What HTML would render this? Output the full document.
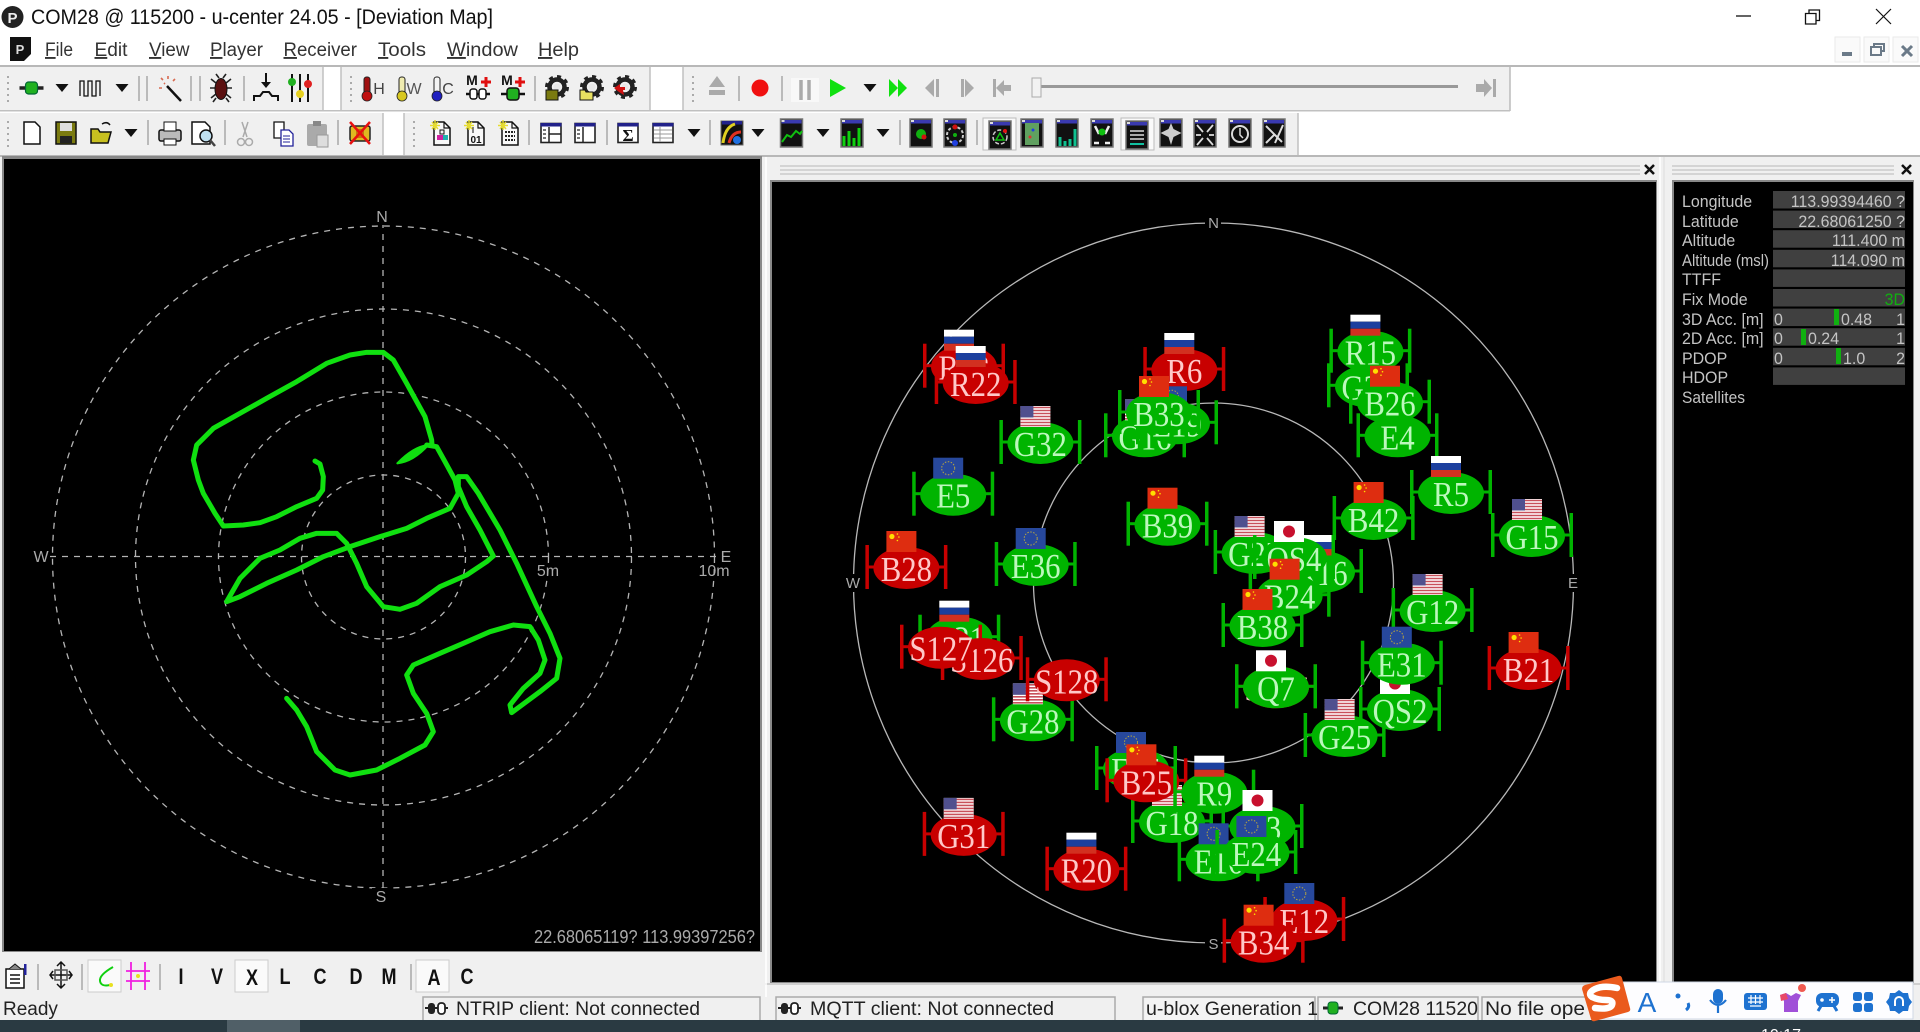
<!DOCTYPE html>
<html><head><meta charset="utf-8"><title>u-center</title>
<style>
html,body{margin:0;padding:0;background:#fff;overflow:hidden}
svg{display:block;font-family:"Liberation Sans",sans-serif}
.m{font-size:19px;fill:#333}
.m tspan{text-decoration:underline}
.st{font-size:19px;fill:#222}
.lb{font-size:17px;fill:#c4c4c4;transform-box:fill-box;transform-origin:0 0;transform:scaleX(.94)}
.lx{font-size:17px;fill:#c4c4c4}
.vl{font-size:17px;fill:#c4c4c4;text-anchor:end;transform-box:fill-box;transform-origin:100% 0;transform:scaleX(.94)}
.dl{font-size:16px;fill:#aaa;text-anchor:middle}
.skl{font-size:15px;fill:#aaa;text-anchor:middle}
.sep{stroke:#a8a8a8;stroke-width:1.5}
.sat text{font-family:"Liberation Serif",serif;font-size:35px;text-anchor:middle;transform:scale(.88,1)}
.g{color:#00b400}.g text{fill:#bcf8bc}
.r{color:#c80000}.r text{fill:#ffc8c8}
.tb{font-size:22px;font-weight:bold;fill:#111;text-anchor:middle;transform-box:fill-box;transform-origin:50% 50%;transform:scaleX(.82)}
</style></head><body>
<svg width="1920" height="1032" viewBox="0 0 1920 1032" xmlns="http://www.w3.org/2000/svg">
<defs>
<g id="b" fill="currentColor">
<ellipse cx="0" cy="1" rx="33" ry="21"/>
<rect x="-41" y="-22" width="3.5" height="44"/><rect x="37.5" y="-22" width="3.5" height="44"/>
<rect x="-40" y="-1.5" width="80" height="3"/>
</g>
<g id="ru"><rect width="30" height="7" fill="#fff"/><rect y="7" width="30" height="7" fill="#1c3f9e"/><rect y="14" width="30" height="7" fill="#d23020"/></g>
<g id="cn"><rect width="30" height="21" fill="#de2d10"/><circle cx="5.500" cy="5.500" r="2.600" fill="#ffde00"/><circle cx="11" cy="3" r=".8" fill="#ffde00"/><circle cx="12.500" cy="6" r=".8" fill="#ffde00"/><circle cx="11" cy="9.500" r=".8" fill="#ffde00"/></g>
<g id="us"><rect width="30" height="21" fill="#fff"/><path d="M0 1.500h30M0 4.500h30M0 7.500h30M0 10.500h30M0 13.500h30M0 16.500h30M0 19.500h30" stroke="#c8505a" stroke-width="1.600"/><rect width="13" height="11.500" fill="#50508e"/></g>
<g id="eu"><rect width="30" height="21" fill="#27489c"/><circle cx="15" cy="10.500" r="6.500" fill="none" stroke="#b8a640" stroke-width="1" stroke-dasharray="1.500 1.500"/></g>
<g id="jp"><rect width="30" height="21" fill="#fff"/><circle cx="15" cy="10.500" r="6" fill="#c8102e"/></g>
<path id="d" d="M-6.500-4H6.500L0 4z" fill="#111"/>
<g id="w"><rect x="-11" y="-14" width="22" height="28" fill="#111" stroke="#777" stroke-width="1.500"/><rect x="-10" y="-13" width="20" height="3.500" fill="#3a3ab0"/><rect x="-10" y="-13" width="3" height="2" fill="#ddd"/></g>
<g id="gr" fill="#aaa"><rect x="0" y="-12" width="2" height="2"/><rect x="0" y="-6" width="2" height="2"/><rect x="0" y="0" width="2" height="2"/><rect x="0" y="6" width="2" height="2"/><rect x="0" y="12" width="2" height="2"/></g>
<g id="gear"><circle r="7.500" fill="none" stroke="#222" stroke-width="4.500"/><circle r="10.500" fill="none" stroke="#222" stroke-width="3" stroke-dasharray="4 4.200"/><circle r="3.500" fill="#e8e8e8"/></g>
<g id="dp"><path d="M-8-11H2l6 6V12H-8z" fill="#f8f8f8" stroke="#111" stroke-width="1.500"/><path d="M2-11v6h6" fill="none" stroke="#111" stroke-width="1.200"/></g>
<g id="sp"><path d="M-10-11l6 7M-4-11l-6 7M-12-7.500h10M-7-13v10" stroke="#e6dc30" stroke-width="1.500"/></g>
<g id="lay"><rect x="-10" y="-9.500" width="20" height="19" fill="#fff" stroke="#222" stroke-width="1.600"/><rect x="-10.500" y="-10" width="21" height="3.500" fill="#22228a"/></g>
</defs>

<rect width="1920" height="1032" fill="#fff"/>
<!-- title -->
<circle cx="12.500" cy="17" r="11" fill="#222"/><text x="12.500" y="23" font-size="15" font-weight="bold" fill="#eee" text-anchor="middle">P</text>
<text x="31" y="24" font-size="21" fill="#111" textLength="462" lengthAdjust="spacingAndGlyphs">COM28 @ 115200 - u-center 24.05 - [Deviation Map]</text>
<path d="M1736 16h15" stroke="#111" stroke-width="1.300"/>
<path d="M1805.500 13.500h10.500v10.500h-10.500zM1809 13.500v-3.500h10.500v10.500h-3.500" fill="none" stroke="#111" stroke-width="1.300"/>
<path d="M1876 9l15 15M1891 9l-15 15" stroke="#111" stroke-width="1.200"/>
<!-- menu -->
<path d="M10 37h21v17l-7 7h-14z" fill="#111"/><text x="20" y="54" font-size="13" font-weight="bold" fill="#ddd" text-anchor="middle">P</text>
<text class="m" x="45" y="56" textLength="28" lengthAdjust="spacingAndGlyphs"><tspan>F</tspan>ile</text>
<text class="m" x="94.500" y="56" textLength="33" lengthAdjust="spacingAndGlyphs"><tspan>E</tspan>dit</text>
<text class="m" x="149" y="56" textLength="40.500" lengthAdjust="spacingAndGlyphs"><tspan>V</tspan>iew</text>
<text class="m" x="210" y="56" textLength="53" lengthAdjust="spacingAndGlyphs"><tspan>P</tspan>layer</text>
<text class="m" x="283.500" y="56" textLength="73.500" lengthAdjust="spacingAndGlyphs"><tspan>R</tspan>eceiver</text>
<text class="m" x="378" y="56" textLength="48" lengthAdjust="spacingAndGlyphs"><tspan>T</tspan>ools</text>
<text class="m" x="447" y="56" textLength="71" lengthAdjust="spacingAndGlyphs"><tspan>W</tspan>indow</text>
<text class="m" x="538" y="56" textLength="41" lengthAdjust="spacingAndGlyphs"><tspan>H</tspan>elp</text>
<g fill="#fafafa" stroke="#eaeaea"><rect x="1835" y="37" width="25" height="25"/><rect x="1864" y="37" width="25" height="25"/><rect x="1893" y="37" width="25" height="25"/></g>
<rect x="1842" y="52" width="10" height="4" fill="#6b7a88"/>
<path d="M1871 47h10v8h-10zM1874 47v-3h10v7h-3" fill="none" stroke="#6b7a88" stroke-width="2"/>
<path d="M1902 46l10 10M1912 46l-10 10" stroke="#6b7a88" stroke-width="3"/>

<!-- toolbars background -->
<rect x="0" y="65" width="1920" height="2" fill="#b8b8b8"/>
<rect x="0" y="67" width="323" height="44" fill="#f0f0f0"/>
<rect x="341" y="67" width="309" height="44" fill="#f0f0f0"/>
<rect x="683" y="67" width="827" height="44" fill="#f0f0f0"/>
<path d="M1510 67v44" stroke="#bbb" stroke-width="1.500"/>
<rect x="0" y="110" width="1510" height="1.500" fill="#c0c0c0"/>
<rect x="0" y="113" width="383" height="42" fill="#f0f0f0"/>
<rect x="404" y="113" width="894" height="42" fill="#f0f0f0"/>
<path d="M383 113v42M404 113v42M1298 113v42M323 67v44M341 67v44M650 67v44M683 67v44" stroke="#c0c0c0" stroke-width="1.500"/>
<rect x="0" y="155" width="1920" height="2" fill="#b8b8b8"/>
<!-- main bg -->
<rect x="0" y="157" width="1920" height="863" fill="#f0f0f0"/>

<!-- toolbar row1 -->
<g>
<use href="#gr" x="7" y="88"/><use href="#gr" x="350" y="88"/><use href="#gr" x="692" y="88"/>
<g transform="translate(31.500,88)"><path d="M-12 0h24" stroke="#222" stroke-width="3.500"/><rect x="-6" y="-6" width="12" height="12" rx="3" fill="#20b020" stroke="#063" stroke-width="1.200"/></g>
<use href="#d" x="62" y="88"/>
<path d="M80 96V81h4v15h4V81h4v15h4V81h4v15" fill="none" stroke="#111" stroke-width="1.300"/>
<use href="#d" x="122" y="88"/>
<path class="sep" d="M139 76v25M147 76v25M191 76v25M200 76v25M244 76v25M535 76v25M739 76v25M782 76v25"/>
<g transform="translate(170,88)"><path d="M-3-2L11 13" stroke="#111" stroke-width="2.500"/><path d="M-9-10l2 2M-11 0h3M-2-12v3M3-7l2-2M-6-5l1 1" stroke="#d86a50" stroke-width="1.600"/></g>
<g transform="translate(221,88)"><path d="M-10-9l5 4M10-9l-5 4M-11 0h22M-10 10l5-4M10 10l-5-4M-5-14l3 4M5-14l-3 4M-8 14l3-4M8 14l-3-4" stroke="#222" stroke-width="1.600"/><ellipse cy="1" rx="6" ry="10.500" fill="#5a1010" stroke="#111"/></g>
<g transform="translate(266,88)"><path d="M0-15v12" stroke="#111" stroke-width="2"/><path d="M-5-6L0 0L5-6z" fill="#111"/><path d="M-12 13V8h6l3-4h6l3 4h6v5" fill="none" stroke="#111" stroke-width="2"/></g>
<g transform="translate(300,88)"><path d="M-8-14V14M0-14V14M8-14V14" stroke="#111" stroke-width="2"/><circle cx="-8" cy="-6" r="4" fill="#20b020"/><circle cx="0" cy="6" r="4" fill="#e6d020"/><circle cx="8" cy="-4" r="4" fill="#e02020"/></g>
<!-- thermometers -->
<g transform="translate(367,88)"><rect x="-3" y="-11" width="6" height="20" rx="2.500" fill="#a01010" stroke="#222"/><circle cy="8" r="5" fill="#c01010" stroke="#222" stroke-width=".8"/></g><text x="379" y="94" font-size="16" fill="#444" text-anchor="middle">H</text>
<g transform="translate(402,88)"><rect x="-3" y="-11" width="6" height="20" rx="2.500" fill="#f0ecb0" stroke="#222"/><circle cy="8" r="5" fill="#d8c820" stroke="#222" stroke-width=".8"/></g><text x="414" y="94" font-size="16" fill="#555" text-anchor="middle">W</text>
<g transform="translate(437,88)"><rect x="-3" y="-11" width="6" height="20" rx="2.500" fill="#f4f4f4" stroke="#222"/><circle cy="8" r="5" fill="#2020c0" stroke="#222" stroke-width=".8"/></g><text x="448" y="94" font-size="16" fill="#444" text-anchor="middle">C</text>
<g transform="translate(478,88)"><text x="-6" y="-3" font-size="14" font-weight="bold" fill="#111" text-anchor="middle">M</text><path d="M8-11v10M3-6h10" stroke="#e01010" stroke-width="3"/><path d="M-12 6h24" stroke="#111" stroke-width="2.500"/><rect x="-8" y="1" width="7" height="10" rx="2.500" fill="#fff" stroke="#111" stroke-width="1.500"/><rect x="1" y="1" width="7" height="10" rx="2.500" fill="#fff" stroke="#111" stroke-width="1.500"/></g>
<g transform="translate(513,88)"><text x="-6" y="-3" font-size="14" font-weight="bold" fill="#111" text-anchor="middle">M</text><path d="M7-11v10M2-6h10" stroke="#e01010" stroke-width="3"/><path d="M-12 6h24" stroke="#111" stroke-width="2.500"/><rect x="-6" y="0" width="12" height="12" rx="3" fill="#20b020" stroke="#111" stroke-width="1.500"/></g>
<use href="#gear" x="557" y="87"/><rect x="546" y="90" width="12" height="10" fill="#7a7a10" stroke="#111"/>
<use href="#gear" x="592" y="87"/><path d="M580 100V90h5l1 2h7v8z" fill="#e8e060" stroke="#111"/>
<use href="#gear" x="625" y="87"/><path d="M614 88l6-4v3h5v3h-2l1 5-5-3z" fill="#d01010"/>
<path d="M709 87l8-11 8 11zM709 90h16v5h-16z" fill="#aaa"/>
<circle cx="760" cy="88" r="8.500" fill="#f01010"/>
<rect x="791" y="78" width="28" height="24" fill="#f8f8f8"/><path d="M801 80v20M809 80v20" stroke="#aaa" stroke-width="3.500"/>
<path d="M830 79l16 9-16 9z" fill="#10e010"/>
<use href="#d" x="870" y="88"/>
<path d="M889 79l9 9-9 9zM898 79l9 9-9 9z" fill="#10e010"/>
<path d="M925 88l9-9v18zM936 79h3v18h-3z" fill="#aaa"/>
<path d="M974 88l-9-9v18zM961 79h3v18h-3z" fill="#aaa"/>
<path d="M993 79h3v18h-3zM996 88l8-8v5h7v6h-7v5z" fill="#aaa"/>
<rect x="1041" y="85" width="417" height="3" fill="#999"/>
<rect x="1032" y="78" width="9" height="19" fill="#f2f2f2" stroke="#aaa"/>
<path d="M1476 84h8v-5l8 9-8 9v-5h-8zM1493 79h3v18h-3z" fill="#aaa"/>
</g>

<!-- toolbar row2 -->
<g>
<use href="#gr" x="7" y="133"/><use href="#gr" x="413" y="133"/>
<path d="M24 122h11l5 5v17h-16z" fill="#fff" stroke="#111" stroke-width="1.500"/>
<rect x="56" y="122" width="20" height="22" fill="#7a7a10" stroke="#111" stroke-width="1.500"/><rect x="60" y="123" width="12" height="8" fill="#ddd"/><rect x="60" y="136" width="12" height="7" fill="#222"/>
<path d="M91 143v-14h7l2 3h11l-3 11z" fill="#c8c020" stroke="#111" stroke-width="1.500"/><path d="M102 124q5-3 8 1" fill="none" stroke="#111" stroke-width="1.500"/>
<use href="#d" x="131" y="133"/>
<path class="sep" d="M148 120v25M225 120v25M338 120v25M529 120v25M607 120v25M710 120v25M900 120v25M977 120v25"/>
<g transform="translate(170,133)"><rect x="-11" y="-3" width="22" height="11" rx="2" fill="#bbb" stroke="#111" stroke-width="1.500"/><rect x="-6" y="-11" width="12" height="9" fill="#fff" stroke="#111"/><rect x="-6" y="6" width="12" height="6" fill="#fff" stroke="#111"/></g>
<g transform="translate(204,133)"><path d="M-12-11h13l5 5v17h-18z" fill="#fff" stroke="#111" stroke-width="1.500"/><circle cx="2" cy="3" r="6" fill="#bfe0f0" stroke="#111" stroke-width="1.500"/><path d="M6 7l5 6" stroke="#444" stroke-width="2.500"/></g>
<g transform="translate(245,133)" fill="none" stroke="#aaa" stroke-width="1.500"><path d="M-3-11L2 4M3-11L-2 4"/><circle cx="-4" cy="9" r="3.500"/><circle cx="4" cy="9" r="3.500"/></g>
<g transform="translate(283,133)"><path d="M-9-11h10v16h-10z" fill="#fff" stroke="#111" stroke-width="1.300"/><path d="M-2-3h8l4 4v12h-12z" fill="#fff" stroke="#22229a" stroke-width="1.300"/><path d="M0 3h7M0 6h7M0 9h7" stroke="#22229a"/></g>
<g transform="translate(317,133)"><rect x="-10" y="-9" width="20" height="22" rx="2" fill="#aaa"/><rect x="-4" y="-12" width="8" height="5" fill="#888"/><rect x="0" y="2" width="11" height="12" fill="#ddd" stroke="#999"/></g>
<g transform="translate(360,133)"><rect x="-10" y="-7" width="20" height="15" rx="2" fill="#e0b820" stroke="#222" stroke-width="1.500"/><path d="M-4-4h8v9h-8z" fill="#c87010"/><path d="M-10-11L10 11M10-11L-10 11" stroke="#e81010" stroke-width="2.500"/></g>
<!-- doc stars -->
<g transform="translate(442,133)"><use href="#dp"/><path d="M-2-3h4v4h-4z" fill="none" stroke="#111"/><rect x="-5" y="2" width="6" height="5" fill="#d020a0"/><rect x="1" y="2" width="5" height="5" fill="#20b0b0"/><use href="#sp"/></g>
<g transform="translate(476,133)"><use href="#dp"/><text y="10" x="0" font-size="10" font-weight="bold" text-anchor="middle" fill="#111">01</text><path d="M-3-6v6" stroke="#111"/><use href="#sp"/></g>
<g transform="translate(510,133)"><use href="#dp"/><path d="M-5-1h10M-5 3h10M-5 7h10" stroke="#222" stroke-width="2" stroke-dasharray="2 1"/><use href="#sp"/></g>
<g transform="translate(551,133)"><use href="#lay"/><path d="M-2-6v15M-2 1h12" stroke="#222" stroke-width="1.500"/><path d="M-8-3h3M-8 1h3M-8 5h3" stroke="#777" stroke-width="2"/></g>
<g transform="translate(585,133)"><use href="#lay"/><path d="M-2-6v15" stroke="#222" stroke-width="1.500"/><path d="M-8-3h3M-8 1h3M-8 5h3" stroke="#777" stroke-width="2"/></g>
<g transform="translate(628,133)"><use href="#lay"/><text y="8" x="0" font-size="17" font-weight="bold" font-family="Liberation Serif" text-anchor="middle" fill="#111">Σ</text></g>
<g transform="translate(663,133)"><use href="#lay"/><path d="M-9-3h18M-9 1h18M-9 5h18M-3-6V9" stroke="#999"/></g>
<use href="#d" x="694" y="133"/>
<g transform="translate(732,133)"><rect x="-11" y="-12" width="22" height="24" fill="#111" stroke="#666"/><rect x="-10" y="-12" width="20" height="3.500" fill="#22228a"/><path d="M-9 10q2-16 12-19" stroke="#e0d020" stroke-width="3" fill="none"/><path d="M-3 10q3-11 12-11" stroke="#e03020" stroke-width="3" fill="none"/><circle cx="5" cy="7" r="4" fill="#2070e0"/></g>
<use href="#d" x="758" y="133"/>
<use href="#w" x="791.500" y="133"/><path d="M782 142l5-7 4 2 5-6 4 3 2-3" fill="none" stroke="#10c010" stroke-width="2"/>
<use href="#d" x="823" y="133"/>
<use href="#w" x="852" y="133"/><path d="M844 146v-10M849 146v-15M854 146v-8M859 146v-18" stroke="#10d010" stroke-width="3"/>
<use href="#d" x="883" y="133"/>
<use href="#w" x="921" y="133"/><circle cx="921" cy="134" r="5" fill="#10b010"/><circle cx="924" cy="137" r="2.500" fill="#d01010"/>
<use href="#w" x="955" y="133"/><circle cx="955" cy="135" r="8" fill="none" stroke="#ccc" stroke-width="2" stroke-dasharray="3 2"/><circle cx="955" cy="127" r="2.500" fill="#d01010"/><circle cx="955" cy="143" r="3" fill="#2040e0"/><circle cx="955" cy="135" r="2" fill="#10b010"/>
<rect x="983" y="118" width="33" height="32" fill="#fafafa" stroke="#bbb"/><rect x="1121" y="118" width="33" height="32" fill="#fafafa" stroke="#bbb"/>
<use href="#w" x="1000" y="135"/><circle cx="1000" cy="137" r="7" fill="none" stroke="#ccc" stroke-width="1.500" stroke-dasharray="4 2"/><path d="M996 140l4-7 4 7z" fill="none" stroke="#10c010" stroke-width="1.500"/><circle cx="1005" cy="131" r="2" fill="#e01010"/>
<use href="#w" x="1032" y="133"/><rect x="1025" y="123" width="14" height="22" fill="#60a060"/><circle cx="1033" cy="130" r="1.500" fill="#2040e0"/><circle cx="1030" cy="137" r="1.500" fill="#e03030"/>
<use href="#w" x="1067" y="133"/><path d="M1060 146v-9M1065 146v-5M1070 146v-7M1075 146v-17" stroke="#10c090" stroke-width="3"/>
<use href="#w" x="1102" y="133"/><path d="M1095 126l4 8M1109 126l-4 8M1094 143h5M1105 143h5" stroke="#eee" stroke-width="2.500"/><circle cx="1102" cy="132" r="3.500" fill="#10c010"/>
<use href="#w" x="1137" y="135"/><path d="M1130 131h14M1130 135h14M1130 139h14" stroke="#aaa" stroke-width="2"/><path d="M1130 144h14" stroke="#10c0a0" stroke-width="2"/>
<use href="#w" x="1171" y="133"/><path d="M1171 123l2.500 6 8 4-8 4-2.500 8-2.500-8-8-4 8-4z" fill="#ccc"/>
<use href="#w" x="1205" y="133"/><path d="M1197 125l6 7M1213 125l-6 7M1197 145l6-7M1213 145l-6-7M1196 135h5M1209 135h5" stroke="#ddd" stroke-width="1.800"/>
<use href="#w" x="1240" y="133"/><circle cx="1240" cy="134" r="8" fill="none" stroke="#ddd" stroke-width="2"/><path d="M1240 128v7l3 3" stroke="#ddd" stroke-width="1.500" fill="none"/>
<use href="#w" x="1274" y="133"/><path d="M1266 126l16 16M1283 125l-8 18M1266 143l8-8" stroke="#ddd" stroke-width="2"/>
</g>

<!-- LEFT PANEL -->
<rect x="2" y="156" width="760" height="796" fill="#888"/>
<rect x="4" y="159" width="756" height="792" fill="#000"/>
<g fill="none" stroke="#b4b4b4" stroke-width="1.300" stroke-dasharray="6 6">
<circle cx="383.500" cy="557" r="82"/><circle cx="383.500" cy="557" r="165"/><circle cx="383.500" cy="557" r="248"/><circle cx="383.500" cy="557" r="331"/>
<path d="M50 556.500H720M383 222V890"/>
</g>
<rect x="374" y="208" width="17" height="17" fill="#000"/><rect x="372" y="888" width="17" height="17" fill="#000"/>
<text class="dl" x="382" y="222">N</text><text class="dl" x="41" y="562">W</text><text class="dl" x="726" y="562">E</text><text class="dl" x="381" y="902">S</text><text class="dl" x="548" y="576">5m</text><text class="dl" x="714" y="576">10m</text>
<text x="755" y="943" font-size="18" fill="#aaa" text-anchor="end" textLength="221" lengthAdjust="spacingAndGlyphs">22.68065119? 113.99397256?</text>
<g transform="translate(150,330) scale(.33333)" fill="none" stroke="#10e010" stroke-width="15" stroke-linejoin="round" stroke-linecap="round">
<path d="M495 393L510 402 520 440 518 480 500 505 440 530 380 560 330 578 280 585 220 588 195 550 160 490 145 450 130 390 140 345 190 295 270 250 350 205 440 155 530 100 600 75 650 67 700 67 730 90 770 160 825 260 845 330 846 345"/>
<path d="M830 345L860 350 885 395 915 450 925 490 900 535 830 565 770 595 690 620 600 650 520 680 440 720 350 760 270 800 230 815 270 745 330 685 390 660 450 625 500 610 560 610 590 640 620 700 650 770 700 830 750 838 800 820 870 770 950 735 1010 695 1030 678 990 600 950 530 925 470 925 440 950 440 985 490 1050 600 1100 700 1160 830 1200 910 1230 985 1220 1045 1170 1085 1085 1148 1080 1125 1120 1075 1170 1030 1185 990 1165 930 1140 890 1090 885 1020 905 940 940 870 970 790 1005 770 1035 790 1090 830 1150 850 1205 825 1245 750 1285 680 1320 600 1335 555 1320 500 1265 470 1190 440 1140 410 1105"/>
<path d="M742 400Q790 350 835 345Q790 395 742 400z" fill="#10e010" stroke-width="6"/>
</g>

<!-- bottom toolbar -->
<g>
<g transform="translate(15,976)"><rect x="-9" y="-7" width="18" height="19" fill="#fff" stroke="#111" stroke-width="1.500"/><path d="M-5-1h10M-5 3h10M-5 7h10" stroke="#111" stroke-width="1.500"/><path d="M-6-7l6-5 6 5" fill="#888" stroke="#111"/><rect x="9" y="-12" width="2.500" height="11" fill="#22229a"/></g>
<g transform="translate(61,975)" fill="none" stroke="#111" stroke-width="1.500"><path d="M0-13V13M-11 0H11M-4-9L0-13 4-9M-4 9L0 13 4 9M-8-4L-11 0-8 4M8-4L11 0 8 4"/><rect x="-6" y="-5" width="12" height="10" stroke="#555"/></g>
<path class="sep" d="M38 964v26M82 964v26M160 964v26M411 964v26"/>
<rect x="88" y="960" width="33" height="32" fill="#fafafa" stroke="#ccc"/>
<path d="M113 967q-14 8-13 14t10 4" fill="none" stroke="#10d010" stroke-width="2"/><circle cx="111" cy="985" r="2" fill="#e8e020"/>
<path d="M131 962v28M145 962v28M126 971h24M126 981h24" stroke="#f020e0" stroke-width="1.800"/><circle cx="138" cy="976" r="2" fill="#e8e020"/>
<rect x="235" y="960" width="33" height="32" fill="#fafafa" stroke="#ccc"/>
<rect x="416" y="960" width="33" height="32" fill="#fafafa" stroke="#ccc"/>
<text class="tb" x="181" y="984">I</text><text class="tb" x="217" y="984">V</text><text class="tb" x="252" y="985">X</text><text class="tb" x="285" y="984">L</text><text class="tb" x="320" y="984">C</text><text class="tb" x="356" y="984">D</text><text class="tb" x="389" y="984">M</text><text class="tb" x="434" y="985">A</text><text class="tb" x="467" y="984">C</text>
</g>

<!-- CENTER PANEL -->
<path d="M780 166H1640M780 170H1640M780 174H1640" stroke="#c4c4c4" stroke-width="1.300"/>
<path d="M1645 165l9 9M1654 165l-9 9" stroke="#111" stroke-width="2.500"/>
<rect x="770" y="180" width="887" height="803" fill="#888"/>
<rect x="772" y="182" width="884" height="800" fill="#000"/>
<circle cx="1213.500" cy="583" r="360" fill="none" stroke="#b8b8b8" stroke-width="1.300"/>
<circle cx="1213.500" cy="583" r="180" fill="none" stroke="#b8b8b8" stroke-width="1.300"/>
<g><rect x="1205" y="214" width="16" height="18" fill="#000"/><text class="skl" x="1213.500" y="228">N</text><rect x="1205" y="934" width="16" height="18" fill="#000"/><text class="skl" x="1213.500" y="949">S</text><rect x="845" y="574" width="17" height="18" fill="#000"/><text class="skl" x="853" y="588">W</text><rect x="1565" y="574" width="16" height="18" fill="#000"/><text class="skl" x="1573" y="588">E</text></g>

<g class="sat">
<g class="r" transform="translate(964 365.700)"><use href="#b"/><use href="#ru" x="-20" y="-36"/><text y="14">R12</text></g>
<g class="r" transform="translate(975.700 382)"><use href="#b"/><use href="#ru" x="-20" y="-36"/><text y="14">R22</text></g>
<g class="g" transform="translate(1040.400 442)"><use href="#b"/><use href="#us" x="-20" y="-36"/><text y="14">G32</text></g>
<g class="g" transform="translate(953.200 493.700)"><use href="#b"/><use href="#eu" x="-20" y="-36"/><text y="14">E5</text></g>
<g class="r" transform="translate(906.400 567)"><use href="#b"/><use href="#cn" x="-20" y="-36"/><text y="14">B28</text></g>
<g class="g" transform="translate(1035.700 564)"><use href="#b"/><use href="#eu" x="-20" y="-36"/><text y="14">E36</text></g>
<g class="g" transform="translate(1167.500 523.700)"><use href="#b"/><use href="#cn" x="-20" y="-36"/><text y="14">B39</text></g>
<g class="r" transform="translate(1184.300 369)"><use href="#b"/><use href="#ru" x="-20" y="-36"/><text y="14">R6</text></g>
<g class="g" transform="translate(1145 435.300)"><use href="#b"/><use href="#us" x="-20" y="-36"/><text y="14">G16</text></g>
<g class="g" transform="translate(1177 422.300)"><use href="#b"/><use href="#eu" x="-20" y="-36"/><text y="14">E19</text></g>
<g class="g" transform="translate(1159 412)"><use href="#b"/><use href="#cn" x="-20" y="-36"/><text y="14">B33</text></g>
<g class="g" transform="translate(1368 385.300)"><use href="#b"/><text y="14">G29</text></g>
<g class="g" transform="translate(1370.400 350.700)"><use href="#b"/><use href="#ru" x="-20" y="-36"/><text y="14">R15</text></g>
<g class="g" transform="translate(1397.500 435.300)"><use href="#b"/><text y="14">E4</text></g>
<g class="g" transform="translate(1390 401.700)"><use href="#b"/><use href="#cn" x="-20" y="-36"/><text y="14">B26</text></g>
<g class="g" transform="translate(1451 492)"><use href="#b"/><use href="#ru" x="-20" y="-36"/><text y="14">R5</text></g>
<g class="g" transform="translate(1373.600 518)"><use href="#b"/><use href="#cn" x="-20" y="-36"/><text y="14">B42</text></g>
<g class="g" transform="translate(1532 535)"><use href="#b"/><use href="#us" x="-20" y="-36"/><text y="14">G15</text></g>
<g class="g" transform="translate(1322 571)"><use href="#b"/><use href="#ru" x="-20" y="-36"/><text y="14">R16</text></g>
<g class="g" transform="translate(1254.600 552)"><use href="#b"/><use href="#us" x="-20" y="-36"/><text y="14">G27</text></g>
<g class="g" transform="translate(1294 557)"><use href="#b"/><use href="#jp" x="-20" y="-36"/><text y="14">QS4</text></g>
<g class="g" transform="translate(1289.600 594.700)"><use href="#b"/><use href="#cn" x="-20" y="-36"/><text y="14">B24</text></g>
<g class="g" transform="translate(1262.500 625)"><use href="#b"/><use href="#cn" x="-20" y="-36"/><text y="14">B38</text></g>
<g class="g" transform="translate(1432.600 610)"><use href="#b"/><use href="#us" x="-20" y="-36"/><text y="14">G12</text></g>
<g class="r" transform="translate(1276 686.300)"><use href="#b"/><text y="14">S137</text></g>
<g class="g" transform="translate(1276 686.300)"><use href="#b"/><use href="#jp" x="-20" y="-36"/><text y="14">Q7</text></g>
<g class="g" transform="translate(959.300 636.700)"><use href="#b"/><use href="#ru" x="-20" y="-36"/><text y="14">R21</text></g>
<g class="r" transform="translate(981.800 658)"><use href="#b"/><text y="14">S126</text></g>
<g class="r" transform="translate(941 646.700)"><use href="#b"/><text y="14">S127</text></g>
<g class="g" transform="translate(1032.900 719.300)"><use href="#b"/><use href="#us" x="-20" y="-36"/><text y="14">G28</text></g>
<g class="r" transform="translate(1066.800 679.300)"><use href="#b"/><text y="14">S128</text></g>
<g class="g" transform="translate(1400 709)"><use href="#b"/><use href="#jp" x="-20" y="-36"/><text y="14">QS2</text></g>
<g class="g" transform="translate(1401.800 662.700)"><use href="#b"/><use href="#eu" x="-20" y="-36"/><text y="14">E31</text></g>
<g class="g" transform="translate(1344.600 735)"><use href="#b"/><use href="#us" x="-20" y="-36"/><text y="14">G25</text></g>
<g class="r" transform="translate(1528.600 668)"><use href="#b"/><use href="#cn" x="-20" y="-36"/><text y="14">B21</text></g>
<g class="g" transform="translate(1136 768)"><use href="#b"/><use href="#eu" x="-20" y="-36"/><text y="14">E25</text></g>
<g class="g" transform="translate(1172 821)"><use href="#b"/><use href="#us" x="-20" y="-36"/><text y="14">G18</text></g>
<g class="r" transform="translate(1146.400 780.300)"><use href="#b"/><use href="#cn" x="-20" y="-36"/><text y="14">B25</text></g>
<g class="g" transform="translate(1214.300 791.700)"><use href="#b"/><use href="#ru" x="-20" y="-36"/><text y="14">R9</text></g>
<g class="g" transform="translate(1262.500 826)"><use href="#b"/><use href="#jp" x="-20" y="-36"/><text y="14">Q3</text></g>
<g class="g" transform="translate(1218.600 859.300)"><use href="#b"/><use href="#eu" x="-20" y="-36"/><text y="14">E16</text></g>
<g class="g" transform="translate(1256.400 852)"><use href="#b"/><use href="#eu" x="-20" y="-36"/><text y="14">E24</text></g>
<g class="r" transform="translate(963.700 833.900)"><use href="#b"/><use href="#us" x="-20" y="-36"/><text y="14">G31</text></g>
<g class="r" transform="translate(1086.400 868.700)"><use href="#b"/><use href="#ru" x="-20" y="-36"/><text y="14">R20</text></g>
<g class="r" transform="translate(1304.300 919)"><use href="#b"/><use href="#eu" x="-20" y="-36"/><text y="14">E12</text></g>
<g class="r" transform="translate(1263.600 940.700)"><use href="#b"/><use href="#cn" x="-20" y="-36"/><text y="14">B34</text></g>
</g>

<!-- RIGHT PANEL -->
<path d="M1672 166H1894M1672 170H1894M1672 174H1894" stroke="#c4c4c4" stroke-width="1.300"/>
<path d="M1902 165l9 9M1911 165l-9 9" stroke="#111" stroke-width="2.500"/>
<path d="M1664 157v826" stroke="#ddd" stroke-width="1"/>
<rect x="1672" y="180" width="242" height="803" fill="#888"/>
<rect x="1674" y="182" width="239" height="800" fill="#000"/>
<g fill="#404040">
<rect x="1773" y="191" width="132" height="17.500"/><rect x="1773" y="210.600" width="132" height="17.500"/><rect x="1773" y="230.200" width="132" height="17.500"/><rect x="1773" y="249.800" width="132" height="17.500"/><rect x="1773" y="269.400" width="132" height="17.500"/><rect x="1773" y="289" width="132" height="17.500"/><rect x="1773" y="308.600" width="132" height="17.500"/><rect x="1773" y="328.200" width="132" height="17.500"/><rect x="1773" y="347.800" width="132" height="17.500"/><rect x="1773" y="367.400" width="132" height="17.500"/>
</g>
<text class="lb" x="1682" y="207">Longitude</text>
<text class="lb" x="1682" y="227">Latitude</text>
<text class="lb" x="1682" y="246">Altitude</text>
<text class="lx" x="1682" y="266" textLength="87" lengthAdjust="spacingAndGlyphs">Altitude (msl)</text>
<text class="lb" x="1682" y="285">TTFF</text>
<text class="lb" x="1682" y="305">Fix Mode</text>
<text class="lb" x="1682" y="325">3D Acc. [m]</text>
<text class="lb" x="1682" y="344">2D Acc. [m]</text>
<text class="lb" x="1682" y="364">PDOP</text>
<text class="lb" x="1682" y="383">HDOP</text>
<text class="lx" x="1682" y="403" textLength="63" lengthAdjust="spacingAndGlyphs">Satellites</text>
<text class="vl" x="1905" y="207">113.99394460 ?</text>
<text class="vl" x="1905" y="227">22.68061250 ?</text>
<text class="vl" x="1905" y="246">111.400 m</text>
<text class="vl" x="1905" y="266">114.090 m</text>
<text class="vl" x="1905" y="305" style="fill:#10b010">3D</text>
<text class="lb" x="1774" y="325">0</text><rect x="1834" y="309" width="5" height="16" fill="#10b010"/><text class="lb" x="1841" y="325">0.48</text><text class="vl" x="1905" y="325">1</text>
<text class="lb" x="1774" y="344">0</text><rect x="1801" y="329" width="5" height="16" fill="#10b010"/><text class="lb" x="1808" y="344">0.24</text><text class="vl" x="1905" y="344">1</text>
<text class="lb" x="1774" y="364">0</text><rect x="1836" y="348" width="5" height="16" fill="#10b010"/><text class="lb" x="1843" y="364">1.0</text><text class="vl" x="1905" y="364">2</text>

<!-- divider & status -->
<path d="M765 984H1920" stroke="#c4c4c4" stroke-width="1.500"/>
<path d="M766 157v840M1660 157v826" stroke="#fff" stroke-width="1.500"/>
<text class="st" x="3" y="1015">Ready</text>
<g fill="none" stroke="#aaa" stroke-width="1.500">
<path d="M423 1020V997H760V1020"/><path d="M776 1020V997H1115V1020"/><path d="M1143 1020V997H1315V1020"/><path d="M1318 1020V997H1478V1020"/><path d="M1482 1020V997H1600"/>
</g>
<rect x="1145" y="998" width="169" height="22" fill="#f4f4f4"/>
<g><path d="M425 1008h23" stroke="#222" stroke-width="2"/><rect x="428" y="1003" width="7" height="11" rx="3" fill="#222"/><rect x="438" y="1003" width="7" height="11" rx="3" fill="#fff" stroke="#222" stroke-width="1.800"/></g>
<text class="st" x="456" y="1015" textLength="244" lengthAdjust="spacingAndGlyphs">NTRIP client: Not connected</text>
<g transform="translate(353,0)"><path d="M425 1008h23" stroke="#222" stroke-width="2"/><rect x="428" y="1003" width="7" height="11" rx="3" fill="#222"/><rect x="438" y="1003" width="7" height="11" rx="3" fill="#fff" stroke="#222" stroke-width="1.800"/></g>
<text class="st" x="810" y="1015" textLength="244" lengthAdjust="spacingAndGlyphs">MQTT client: Not connected</text>
<text class="st" x="1146" y="1015" textLength="172" lengthAdjust="spacingAndGlyphs">u-blox Generation 1</text>
<path d="M1323 1008h20" stroke="#222" stroke-width="3"/><rect x="1328" y="1002" width="10" height="12" rx="3" fill="#20b020" stroke="#063"/>
<text class="st" x="1353" y="1015" textLength="125" lengthAdjust="spacingAndGlyphs">COM28 11520</text>
<text class="st" x="1485" y="1015" textLength="100" lengthAdjust="spacingAndGlyphs">No file ope</text>

<!-- taskbar -->
<rect x="0" y="1020" width="1920" height="12" fill="#2a3a42"/>
<rect x="227" y="1020" width="73" height="12" fill="#505f67"/>
<text x="1761" y="1040" font-size="16" fill="#fff">10:17</text>

<!-- IME bar -->
<rect x="1600" y="982" width="313" height="37" fill="#fdfdff" stroke="#cfd8e4"/>
<path d="M1582 989q0-3 3-4l33-9q3-1 4 2l8 30q1 3-2 4l-33 9q-3 1-4-2z" fill="#ea5a1c"/>
<path d="M1617 988q-14-3-22 1t-3 8q6 3 14 3t6 5-17 3" fill="none" stroke="#fff" stroke-width="6.500" stroke-linecap="round"/>
<text x="1647" y="1012" font-size="28" fill="#1e72d0" text-anchor="middle">A</text>
<circle cx="1678" cy="996" r="2.500" fill="#1e72d0"/><path d="M1688 1003q2 4-2 7" stroke="#1e72d0" stroke-width="3" fill="none"/>
<rect x="1713" y="989" width="10" height="15" rx="5" fill="#1e72d0"/><path d="M1710 1000q8 10 16 0M1718 1006v7" stroke="#1e72d0" stroke-width="2.200" fill="none"/>
<rect x="1744" y="993" width="23" height="17" rx="3" fill="#1e72d0"/><path d="M1748 998h15M1748 1002h15M1750 1006h11M1751 995v9M1755.500 995v9M1760 995v9" stroke="#fff" stroke-width="1.200"/>
<path d="M1780 995l6-2 5 3 5-3 5 2-3 6v11h-14v-11z" fill="#a050d8"/><path d="M1780 995l6-2 2 6-7 2z" fill="#e84868"/><circle cx="1802" cy="988" r="4" fill="#f05a50"/>
<rect x="1816" y="993" width="23" height="14" rx="6" fill="#1e72d0"/><circle cx="1822" cy="1000" r="1.800" fill="#fff"/><path d="M1829 1000h6M1832 997v6" stroke="#fff" stroke-width="1.500"/><path d="M1818 1011l3-5M1837 1011l-3-5" stroke="#1e72d0" stroke-width="3"/>
<g fill="#1e72d0"><rect x="1853" y="992" width="9" height="9" rx="2.500"/><rect x="1864" y="992" width="9" height="9" rx="2.500"/><rect x="1853" y="1003" width="9" height="9" rx="2.500"/><rect x="1864" y="1003" width="9" height="9" rx="2.500"/></g>
<path d="M1899 990l4 3h5l1 5 3 4-3 4-1 5h-5l-4 3-4-3h-5l-1-5-3-4 3-4 1-5h5z" fill="#1e72d0"/><path d="M1895 1006v-5a4 4 0 0 1 8 0v5" fill="none" stroke="#fff" stroke-width="2"/>
</svg>
</body></html>
